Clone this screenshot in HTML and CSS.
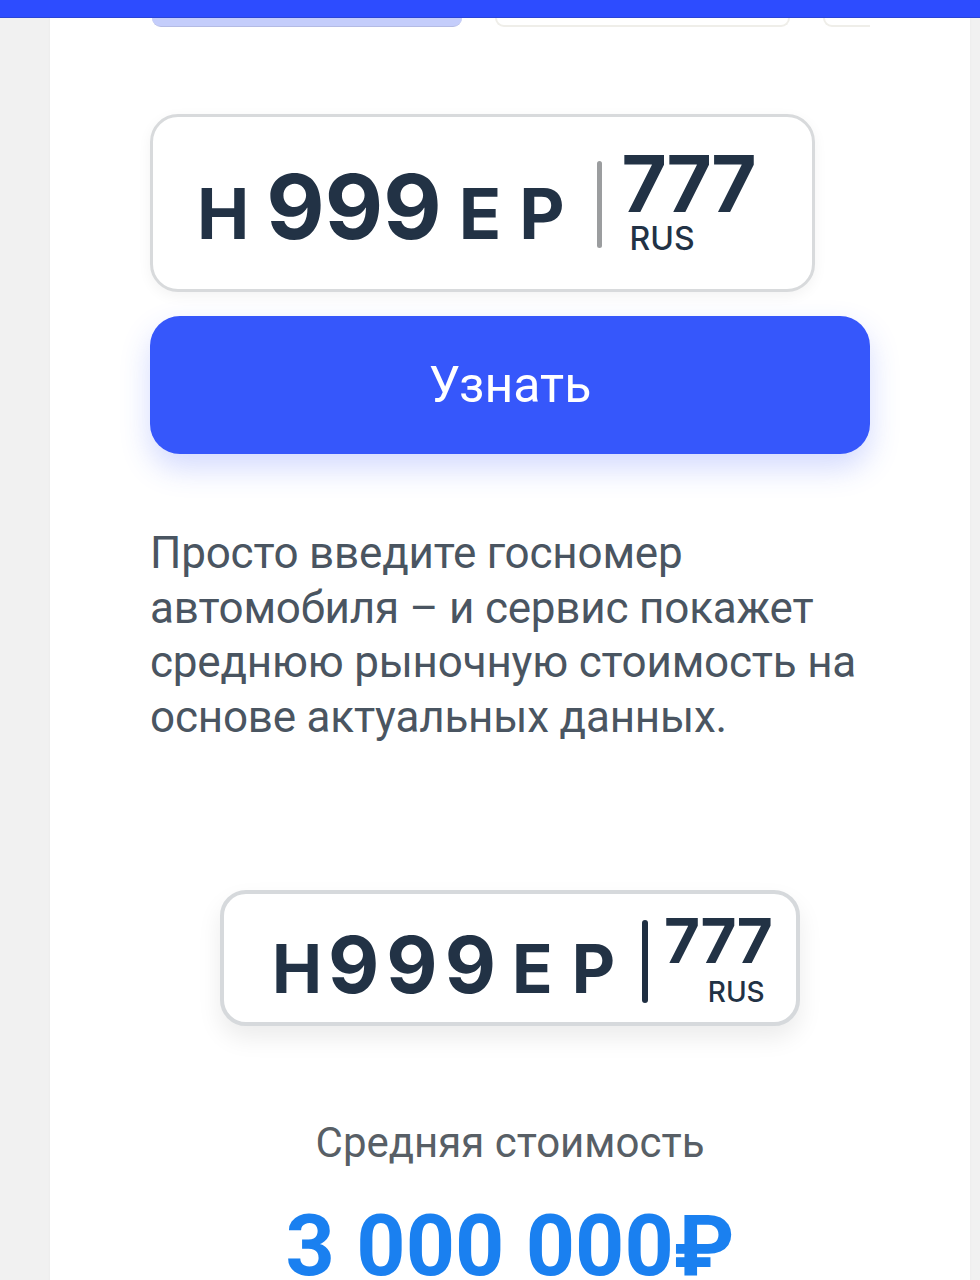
FILE: index.html
```html
<!DOCTYPE html>
<html lang="ru">
<head>
<meta charset="utf-8">
<title>Оценка автомобиля по госномеру</title>
<link rel="stylesheet" href="styles.css">
</head>
<body>
<header class="topbar"></header>
<main class="card">
  <div class="tabs">
    <div class="tab tab-active"></div>
    <div class="tab"></div>
    <div class="tab tab-small"></div>
  </div>

  <div class="plate plate-input">
    <div class="plate-main">
      <span class="pl-letter">Н</span>
      <span class="pl-digits">999</span>
      <span class="pl-letters">ЕР</span>
    </div>
    <span class="plate-divider"></span>
    <div class="plate-region">
      <span class="pl-region-num">777</span>
      <span class="pl-rus">RUS</span>
    </div>
  </div>

  <button class="btn-primary" type="button">Узнать</button>

  <p class="lead">Просто введите госномер автомобиля – и сервис покажет среднюю рыночную стоимость на основе актуальных данных.</p>

  <div class="result">
    <div class="plate plate-result">
      <div class="plate-main">
        <span class="pl-letter">Н</span>
        <span class="pl-digits">999</span>
        <span class="pl-letters">ЕР</span>
      </div>
      <span class="plate-divider"></span>
      <div class="plate-region">
        <span class="pl-region-num">777</span>
        <span class="pl-rus">RUS</span>
      </div>
    </div>
    <div class="result-label">Средняя стоимость</div>
    <div class="result-price">3 000 000₽</div>
  </div>
</main>
</body>
</html>
```
FILE: styles.css
```css
* { box-sizing: border-box; }

html, body {
  margin: 0;
  padding: 0;
  background: #f1f1f1;
  height: 1280px;
  overflow: hidden;
}

body {
  font-family: Roboto, "Noto Sans", Arial, sans-serif;
}

.topbar {
  height: 18px;
  background: #2d4cff;
  border-bottom: 1px solid #2a45d6;
  position: relative;
  z-index: 2;
}

.card {
  width: 920px;
  margin-left: 50px;
  background: #ffffff;
  min-height: 1262px;
  padding: 0 100px;
  box-shadow: 0 0 3px rgba(0,0,0,0.04);
}

/* tabs (scrolled, only the bottoms visible) */
.tabs {
  display: flex;
  gap: 33px;
  width: 720px;
  overflow: hidden;
  height: 10px;
}
.tab {
  flex: 0 0 295px;
  height: 9px;
  background: #ffffff;
  border: 2px solid #efeee9;
  border-top: none;
  border-radius: 0 0 10px 10px;
}
.tab-active {
  flex-basis: 310px;
  margin-left: 2px;
  background: #c4cdfb;
  border: none;
  border-bottom: 1px solid #b4bbe4;
}
.tab-small {
  flex-basis: 90px;
}

/* license plates */
.plate {
  display: flex;
  align-items: center;
  background: #ffffff;
  color: #223245;
  font-family: Inter, "Noto Sans", Arial, sans-serif;
  font-weight: 700;
}

.plate-main {
  display: flex;
  align-items: baseline;
  line-height: 1;
}

.plate-region {
  display: flex;
  flex-direction: column;
  line-height: 1;
}

.plate-divider {
  display: block;
  border-radius: 3px;
}

.pl-rus {
  font-weight: 500;
}

/* input plate */
.plate-input {
  width: 665px;
  height: 178px;
  margin-top: 86px;
  border: 3px solid #d8dadc;
  border-radius: 28px;
  padding-left: 44px;
  box-shadow: 0 4px 14px rgba(0,0,0,0.05);
}
.plate-input .plate-main { margin-top: 8px; }
.plate-input .pl-letter { font-size: 70px; }
.plate-input .pl-digits { font-size: 90px; margin-left: 17px; letter-spacing: 0; }
.plate-input .pl-letters { font-size: 70px; margin-left: 17px; letter-spacing: 18px; }
.plate-input .plate-divider {
  width: 5px;
  height: 87px;
  background: #9b9d9f;
  margin-left: 14px;
  margin-top: 3px;
}
.plate-input .plate-region { margin-left: 20px; margin-bottom: 6px; }
.plate-input .pl-region-num { font-size: 78px; letter-spacing: -2px; }
.plate-input .pl-rus { font-size: 32px; margin-left: 8px; }

/* button */
.btn-primary {
  display: block;
  width: 720px;
  height: 138px;
  margin-top: 24px;
  border: none;
  border-radius: 30px;
  background: #3657fb;
  color: #ffffff;
  font-family: Roboto, "Noto Sans", Arial, sans-serif;
  font-weight: 400;
  font-size: 50px;
  box-shadow: 0 14px 30px rgba(54, 87, 251, 0.22);
}

.lead {
  margin: 72px 0 0;
  font-size: 44px;
  line-height: 54.5px;
  color: #4a5561;
  font-weight: 400;
  max-width: 720px;
  letter-spacing: -0.2px;
}

/* result */
.result {
  display: flex;
  flex-direction: column;
  align-items: center;
  margin-top: 146px;
}

.plate-result {
  width: 580px;
  height: 136px;
  border: 4px solid #d6d9dc;
  border-radius: 26px;
  padding-left: 48px;
  box-shadow: 0 12px 24px rgba(0,0,0,0.08);
}
.plate-result .plate-main { margin-top: 12px; }
.plate-result .pl-letter { font-size: 67px; }
.plate-result .pl-digits { font-size: 79px; margin-left: 6px; letter-spacing: 7px; }
.plate-result .pl-letters { font-size: 67px; margin-left: 9px; letter-spacing: 19px; }
.plate-result .plate-divider {
  width: 6px;
  height: 83px;
  background: #1f2f42;
  margin-left: 8px;
  margin-top: 6px;
}
.plate-result .plate-region { margin-left: 16px; align-items: flex-end; }
.plate-result .pl-region-num { font-size: 62px; letter-spacing: -1px; }
.plate-result .pl-rus { font-size: 28px; margin-top: 6px; margin-right: 7px; }

.result-label {
  margin-top: 92px;
  font-size: 42px;
  line-height: 50px;
  color: #585f66;
}

.result-price {
  margin-top: 27px;
  font-size: 86px;
  line-height: 101px;
  font-weight: 700;
  color: #1a80f0;
}
```
